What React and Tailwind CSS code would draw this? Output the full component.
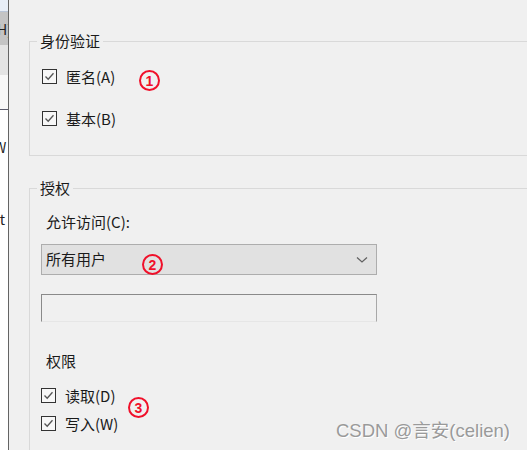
import React from "react";

const font = { fontFamily: '"Noto Sans CJK SC", "Microsoft YaHei", sans-serif' };

const Check = ({ label }) => (
  <div className="flex items-center h-[16px]">
    <span className="w-[15px] h-[15px] shrink-0 border border-[#333333] bg-[#f7f7f7] flex items-center justify-center">
      <svg width="11" height="11" viewBox="0 0 11 11">
        <path d="M1.5 5.5 L4.2 8.3 L9.5 2.2" fill="none" stroke="#555" strokeWidth="1.3" />
      </svg>
    </span>
    <span className="ml-[9px] text-[15px] text-[#1a1a1a] leading-none">{label}</span>
  </div>
);

const Mark = ({ n, className }) => (
  <div
    className={`absolute w-[21px] h-[21px] rounded-full border-2 border-[#f0102a] text-[#f0102a] flex items-center justify-center text-[14px] font-bold leading-none ${className}`}
    style={{ fontFamily: '"Liberation Sans", sans-serif' }}
  >
    {n}
  </div>
);

const App = () => {
  return (
    <div className="relative w-[527px] h-[450px] overflow-hidden flex bg-[#f0f0f0]" style={font}>
      {/* sliver of the window behind */}
      <div className="w-[9px] shrink-0 flex flex-col bg-white border-r border-[#646464] text-[14px] text-[#222] leading-none overflow-hidden">
        <div className="h-[12px] shrink-0 bg-[#e8eef7] border-b border-[#b8c4d6]"></div>
        <div className="h-[33px] shrink-0 bg-[#c4c4c4] flex items-center -ml-[3px]">H)</div>
        <div className="h-[30px] shrink-0 bg-[#e4e4e4]"></div>
        <div className="h-[35px] shrink-0 bg-[#f8f8f8] border-b border-[#5a5a6a]"></div>
        <div className="h-[44px] shrink-0 flex items-end -ml-[6px]">W</div>
        <div className="h-[72px] shrink-0 flex items-end -ml-[4px]">it</div>
      </div>

      <div className="flex-1 min-w-0 pl-[20px] pt-[31px]">
        <fieldset className="w-[600px] h-[125px] border border-[#d9d9d9] pl-[12px]">
          <legend className="-ml-[5px] px-[3px] text-[15px] leading-[20px] text-[#1a1a1a]">身份验证</legend>
          <div className="pt-[17px] flex flex-col gap-[26px]">
            <Check label="匿名(A)" />
            <Check label="基本(B)" />
          </div>
        </fieldset>

        <fieldset className="mt-[22px] w-[600px] h-[300px] border border-[#d9d9d9] pl-[11px]">
          <legend className="-ml-[4px] px-[3px] text-[15px] leading-[20px] text-[#1a1a1a]">授权</legend>
          <div className="pl-[5px] pt-[16px] text-[15px] leading-none text-[#1a1a1a]">允许访问(C):</div>
          <div className="mt-[15px] w-[336px] h-[31px] bg-[#e1e1e1] border border-[#adadad] flex items-center justify-between pl-[4px] pr-[8px] text-[15px] text-[#1a1a1a]">
            <span>所有用户</span>
            <svg width="12" height="8" viewBox="0 0 12 8">
              <path d="M1 1.5 L6 6 L11 1.5" fill="none" stroke="#606060" strokeWidth="1.2" />
            </svg>
          </div>
          <div className="mt-[19px] w-[336px] h-[28px] bg-[#f0f0f0] border border-t-[#8a8a8a] border-l-[#8a8a8a] border-r-[#a8a8a8] border-b-[#e6e6e6]"></div>
          <div className="pl-[5px] pt-[31px] text-[15px] leading-none text-[#1a1a1a]">权限</div>
          <div className="pt-[19px] flex flex-col gap-[12px]">
            <Check label="读取(D)" />
            <Check label="写入(W)" />
          </div>
        </fieldset>
      </div>

      <Mark n="1" className="left-[139px] top-[70px]" />
      <Mark n="2" className="left-[142px] top-[254px]" />
      <Mark n="3" className="left-[128px] top-[397px]" />

      <div
        className="absolute left-[336px] top-[422px] text-[18.5px] text-[#9a9a9a] leading-none [text-shadow:1px_1px_0_#ffffff]"
        style={{ fontFamily: '"Liberation Sans", "Noto Sans CJK SC", sans-serif' }}
      >
        CSDN @言安(celien)
      </div>
    </div>
  );
};

export default App;
